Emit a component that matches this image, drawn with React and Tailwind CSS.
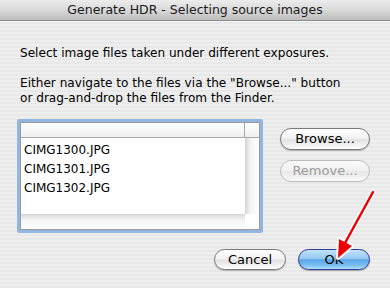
export default function App() {
  const font = { fontFamily: '"DejaVu Sans", "Liberation Sans", sans-serif' };
  return (
    <div
      className="relative w-[390px] h-[288px] overflow-hidden text-[#000] bg-[repeating-linear-gradient(to_bottom,#eeeeee_0px,#eeeeee_2px,#e8e8e8_2px,#e8e8e8_4px)]"
      style={font}
    >
      <div className="h-[21px] flex items-center justify-center text-[12.5px] text-[#1a1a1a] border-b border-[#8c8c8c] bg-[linear-gradient(to_bottom,#ececec,#d9d9d9_50%,#bdbdbd)]">
        Generate HDR - Selecting source images
      </div>
      <div className="border-t border-[#f4f4f4]" />
      <div className="px-[20px] pt-[24px] text-[12.1px] leading-[15px]">
        <p>Select image files taken under different exposures.</p>
        <p className="mt-[15px]">
          Either navigate to the files via the "Browse..." button
          <br />
          or drag-and-drop the files from the Finder.
        </p>
      </div>
      <div className="flex mt-[13px] pl-[17px]">
        <div className="w-[246px] h-[114px] border-[3px] border-[#92b6df] rounded-[2px]">
          <div className="w-full h-full border border-[#9a9a9a] bg-white flex flex-col">
            <div className="h-[15px] flex border-b border-[#a8a8a8] bg-[linear-gradient(to_bottom,#ffffff,#eeeeee)]">
              <div className="flex-1 border-r border-[#a8a8a8]" />
              <div className="w-[14px]" />
            </div>
            <div className="flex-1 flex">
              <div className="flex-1 flex flex-col text-[12px] pl-[3px] pt-[2px]">
                <div className="h-[19px] flex items-center">CIMG1300.JPG</div>
                <div className="h-[19px] flex items-center">CIMG1301.JPG</div>
                <div className="h-[19px] flex items-center">CIMG1302.JPG</div>
              </div>
              <div className="w-[14px] bg-[linear-gradient(to_right,#d4d4d4,#f4f4f4_40%,#ffffff)]" />
            </div>
            <div className="h-[15px] flex">
              <div className="flex-1 bg-[linear-gradient(to_bottom,#d4d4d4,#f4f4f4_40%,#ffffff)]" />
              <div className="w-[14px] bg-white" />
            </div>
          </div>
        </div>
        <div className="ml-[17px] mt-[9px] flex flex-col gap-[10px]">
          <button className="w-[90px] h-[22px] rounded-full border border-[#7a7a7a] text-[13px] text-black bg-[linear-gradient(to_bottom,#ffffff,#f2f2f2_45%,#e2e2e2_55%,#f4f4f4_85%,#ffffff)] shadow-[0_1px_1px_rgba(0,0,0,0.25)]">
            Browse...
          </button>
          <button className="w-[90px] h-[22px] rounded-full border border-[#bdbdbd] text-[13px] text-[#9a9a9a] bg-[linear-gradient(to_bottom,#fafafa,#f2f2f2_45%,#e8e8e8_55%,#f2f2f2_85%,#fafafa)]">
            Remove...
          </button>
        </div>
      </div>
      <div className="flex justify-end gap-[12px] pr-[20px] mt-[16px]">
        <button className="w-[72px] h-[21px] rounded-full border border-[#7a7a7a] text-[13px] text-black bg-[linear-gradient(to_bottom,#ffffff,#f2f2f2_45%,#e2e2e2_55%,#f4f4f4_85%,#ffffff)] shadow-[0_1px_1px_rgba(0,0,0,0.25)]">
          Cancel
        </button>
        <button className="w-[72px] h-[21px] rounded-full border border-[#2b3b96] text-[13px] text-black bg-[linear-gradient(to_bottom,#c3e2fb,#93c8f3_45%,#5aa5e8_52%,#78bdf0_80%,#b4e2fd)] shadow-[0_1px_1px_rgba(0,0,0,0.3)]">
          OK
        </button>
      </div>
      <svg className="absolute left-0 top-0 pointer-events-none" width="390" height="288">
        <line x1="373" y1="192" x2="345" y2="243" stroke="#ffffff" strokeWidth="5" strokeLinecap="round" />
        <polygon points="338,258 352,246 339,239" fill="#ffffff" stroke="#ffffff" strokeWidth="4" strokeLinejoin="round" />
        <line x1="373" y1="192" x2="345" y2="243" stroke="#ee0000" strokeWidth="2.5" strokeLinecap="round" />
        <polygon points="338,258 352,246 339,239" fill="#ee0000" />
      </svg>
    </div>
  );
}
